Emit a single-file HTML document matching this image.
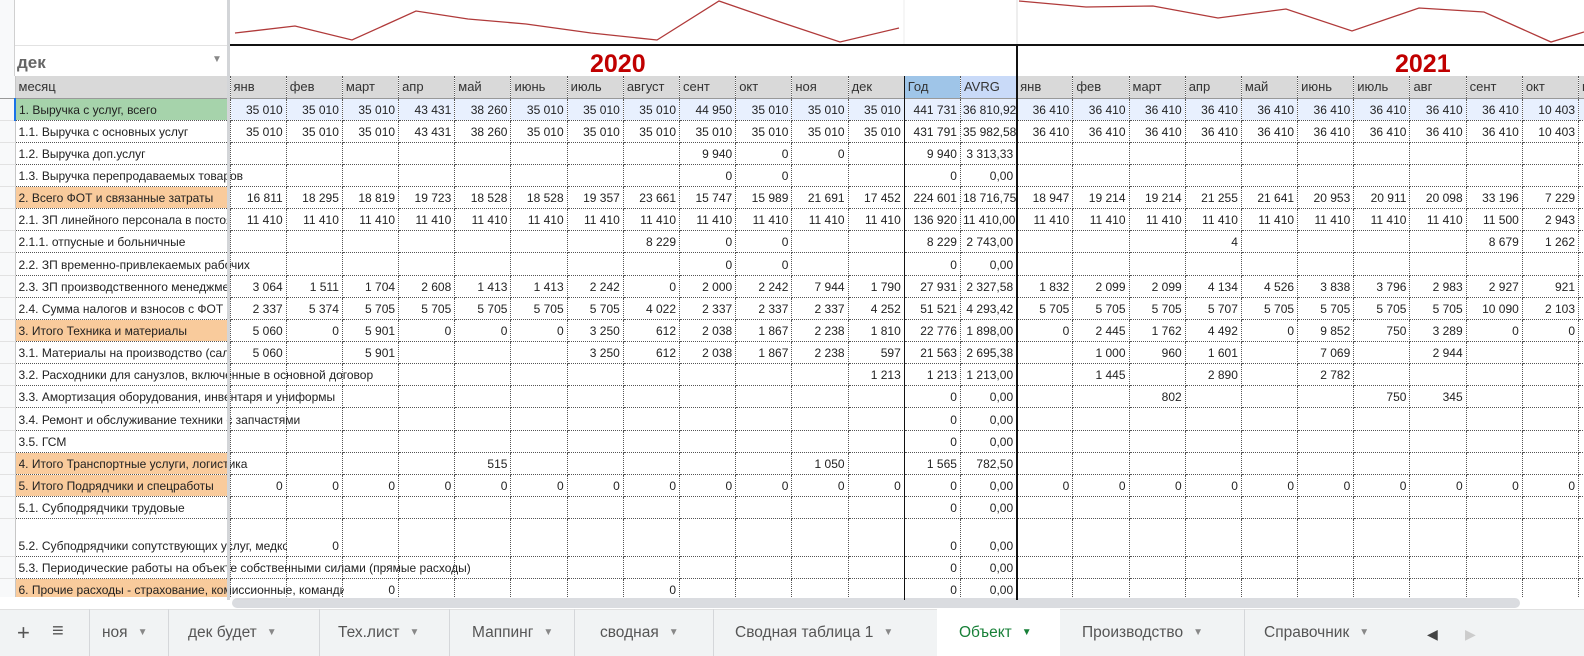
<!DOCTYPE html>
<html><head><meta charset="utf-8">
<style>
*{margin:0;padding:0;box-sizing:border-box}
body{width:1584px;height:656px;overflow:hidden;background:#fff;font-family:"Liberation Sans",Arial,sans-serif;position:relative}
#wrap{position:absolute;left:0;top:0;width:1584px;height:600px;overflow:hidden}
table{position:absolute;left:0;top:76px;border-collapse:collapse;table-layout:fixed;width:1691px}
td{font-size:12px;color:#222;white-space:nowrap;overflow:hidden;border-right:1px dotted #555;border-bottom:1px dotted #555;text-align:right;padding:0 3px 2px 2px;vertical-align:bottom;line-height:15px;height:22.15px}
td.n{background:#f8f9fa;border-right:1px solid #c7c7c7;border-bottom:1px solid #e2e2e2;padding:0}
td.l{text-align:left;overflow:visible;position:relative;padding-left:3px}
td.l div{position:relative;z-index:2;overflow:hidden;width:209px}
tr.h td{background:#d9d9d9;text-align:left;font-size:13px;color:#333;height:22px;vertical-align:middle;padding:0 0 0 3px;border-bottom:1px solid #999}
tr.h td.n{background:#f8f9fa}
.g{background:#a6d3ab}
.o{background:#f9cb9c}
tr.s td{background:#e8f0fe}
tr.s td.l{background:#a6d3ab;border-left:2px solid #1a73e8}
tr.s td.n{background:#f8f9fa}
.yr{position:absolute;top:50px;font-size:25px;font-weight:bold;color:#c00000}
.tab{position:absolute;top:624px;font-size:15.5px;color:#555}
.sep{position:absolute;top:609px;width:1px;height:47px;background:#d5d7da}
.ar{font-size:10px;color:#888;margin-left:10px;position:relative;top:-2px}
</style></head><body>
<div id="wrap">
<div style="position:absolute;left:0;top:0;width:15px;height:600px;background:#f8f9fa;border-right:1px solid #d0d0d0"></div>
<div style="position:absolute;left:15px;top:45px;width:212px;height:1px;background:#e2e2e2"></div>
<svg style="position:absolute;left:0;top:0" width="1584" height="46">
<polyline fill="none" stroke="#b03a3a" stroke-width="1.3" points="235,33 295,26 352,40 416,11 468,19 526,24 591,33 657,40 719,1 780,22 840,42 899,28"/>
<polyline fill="none" stroke="#b03a3a" stroke-width="1.3" points="1019,1 1086,7 1153,6 1218,18 1286,9 1352,31 1419,8 1484,12 1551,42 1584,32"/>
<line x1="1017" y1="0" x2="1017" y2="45" stroke="#ddd"/>
<line x1="904" y1="0" x2="904" y2="45" stroke="#eee"/>
</svg>
<div style="position:absolute;left:230px;top:44px;width:1354px;height:2px;background:#111"></div>
<div style="position:absolute;left:17px;top:53px;font-size:17px;color:#666;font-weight:bold">дек</div>
<div style="position:absolute;left:212px;top:54px;font-size:10px;color:#888">▼</div>
<div class="yr" style="left:590px">2020</div>
<div class="yr" style="left:1395px">2021</div>
<table>
<colgroup><col style="width:15px"><col style="width:215px"><col span="26" style="width:56.2px"></colgroup>
<tr class="h"><td class="n"></td><td>месяц</td><td>янв</td><td>фев</td><td>март</td><td>апр</td><td>май</td><td>июнь</td><td>июль</td><td>август</td><td>сент</td><td>окт</td><td>ноя</td><td>дек</td><td style="background:#9fc5e8">Год</td><td style="background:#c9daf8">AVRG</td><td>янв</td><td>фев</td><td>март</td><td>апр</td><td>май</td><td>июнь</td><td>июль</td><td>авг</td><td>сент</td><td>окт</td><td>нояб</td><td></td></tr>
<tr class="s"><td class="n"></td><td class="l"><div>1. Выручка с услуг, всего</div></td><td>35 010</td><td>35 010</td><td>35 010</td><td>43 431</td><td>38 260</td><td>35 010</td><td>35 010</td><td>35 010</td><td>44 950</td><td>35 010</td><td>35 010</td><td>35 010</td><td>441 731</td><td>36 810,92</td><td>36 410</td><td>36 410</td><td>36 410</td><td>36 410</td><td>36 410</td><td>36 410</td><td>36 410</td><td>36 410</td><td>36 410</td><td>10 403</td><td></td><td></td></tr>
<tr><td class="n"></td><td class="l"><div>1.1. Выручка с основных услуг</div></td><td>35 010</td><td>35 010</td><td>35 010</td><td>43 431</td><td>38 260</td><td>35 010</td><td>35 010</td><td>35 010</td><td>35 010</td><td>35 010</td><td>35 010</td><td>35 010</td><td>431 791</td><td>35 982,58</td><td>36 410</td><td>36 410</td><td>36 410</td><td>36 410</td><td>36 410</td><td>36 410</td><td>36 410</td><td>36 410</td><td>36 410</td><td>10 403</td><td></td><td></td></tr>
<tr><td class="n"></td><td class="l"><div>1.2. Выручка доп.услуг</div></td><td></td><td></td><td></td><td></td><td></td><td></td><td></td><td></td><td>9 940</td><td>0</td><td>0</td><td></td><td>9 940</td><td>3 313,33</td><td></td><td></td><td></td><td></td><td></td><td></td><td></td><td></td><td></td><td></td><td></td><td></td></tr>
<tr><td class="n"></td><td class="l"><div style="width:400px">1.3. Выручка перепродаваемых товаров</div></td><td></td><td></td><td></td><td></td><td></td><td></td><td></td><td></td><td>0</td><td>0</td><td></td><td></td><td>0</td><td>0,00</td><td></td><td></td><td></td><td></td><td></td><td></td><td></td><td></td><td></td><td></td><td></td><td></td></tr>
<tr><td class="n"></td><td class="l o"><div>2. Всего ФОТ и связанные затраты</div></td><td>16 811</td><td>18 295</td><td>18 819</td><td>19 723</td><td>18 528</td><td>18 528</td><td>19 357</td><td>23 661</td><td>15 747</td><td>15 989</td><td>21 691</td><td>17 452</td><td>224 601</td><td>18 716,75</td><td>18 947</td><td>19 214</td><td>19 214</td><td>21 255</td><td>21 641</td><td>20 953</td><td>20 911</td><td>20 098</td><td>33 196</td><td>7 229</td><td></td><td></td></tr>
<tr><td class="n"></td><td class="l"><div>2.1. ЗП линейного персонала в постоянном штате</div></td><td>11 410</td><td>11 410</td><td>11 410</td><td>11 410</td><td>11 410</td><td>11 410</td><td>11 410</td><td>11 410</td><td>11 410</td><td>11 410</td><td>11 410</td><td>11 410</td><td>136 920</td><td>11 410,00</td><td>11 410</td><td>11 410</td><td>11 410</td><td>11 410</td><td>11 410</td><td>11 410</td><td>11 410</td><td>11 410</td><td>11 500</td><td>2 943</td><td></td><td></td></tr>
<tr><td class="n"></td><td class="l"><div>2.1.1. отпусные и больничные</div></td><td></td><td></td><td></td><td></td><td></td><td></td><td></td><td>8 229</td><td>0</td><td>0</td><td></td><td></td><td>8 229</td><td>2 743,00</td><td></td><td></td><td></td><td>4</td><td></td><td></td><td></td><td></td><td>8 679</td><td>1 262</td><td></td><td></td></tr>
<tr><td class="n"></td><td class="l"><div style="width:400px">2.2. ЗП временно-привлекаемых рабочих</div></td><td></td><td></td><td></td><td></td><td></td><td></td><td></td><td></td><td>0</td><td>0</td><td></td><td></td><td>0</td><td>0,00</td><td></td><td></td><td></td><td></td><td></td><td></td><td></td><td></td><td></td><td></td><td></td><td></td></tr>
<tr><td class="n"></td><td class="l"><div>2.3. ЗП производственного менеджмента</div></td><td>3 064</td><td>1 511</td><td>1 704</td><td>2 608</td><td>1 413</td><td>1 413</td><td>2 242</td><td>0</td><td>2 000</td><td>2 242</td><td>7 944</td><td>1 790</td><td>27 931</td><td>2 327,58</td><td>1 832</td><td>2 099</td><td>2 099</td><td>4 134</td><td>4 526</td><td>3 838</td><td>3 796</td><td>2 983</td><td>2 927</td><td>921</td><td></td><td></td></tr>
<tr><td class="n"></td><td class="l"><div>2.4. Сумма налогов и взносов с ФОТ</div></td><td>2 337</td><td>5 374</td><td>5 705</td><td>5 705</td><td>5 705</td><td>5 705</td><td>5 705</td><td>4 022</td><td>2 337</td><td>2 337</td><td>2 337</td><td>4 252</td><td>51 521</td><td>4 293,42</td><td>5 705</td><td>5 705</td><td>5 705</td><td>5 707</td><td>5 705</td><td>5 705</td><td>5 705</td><td>5 705</td><td>10 090</td><td>2 103</td><td></td><td></td></tr>
<tr><td class="n"></td><td class="l o"><div>3. Итого Техника и материалы</div></td><td>5 060</td><td>0</td><td>5 901</td><td>0</td><td>0</td><td>0</td><td>3 250</td><td>612</td><td>2 038</td><td>1 867</td><td>2 238</td><td>1 810</td><td>22 776</td><td>1 898,00</td><td>0</td><td>2 445</td><td>1 762</td><td>4 492</td><td>0</td><td>9 852</td><td>750</td><td>3 289</td><td>0</td><td>0</td><td></td><td></td></tr>
<tr><td class="n"></td><td class="l"><div>3.1. Материалы на производство (сальдо)</div></td><td>5 060</td><td></td><td>5 901</td><td></td><td></td><td></td><td>3 250</td><td>612</td><td>2 038</td><td>1 867</td><td>2 238</td><td>597</td><td>21 563</td><td>2 695,38</td><td></td><td>1 000</td><td>960</td><td>1 601</td><td></td><td>7 069</td><td></td><td>2 944</td><td></td><td></td><td></td><td></td></tr>
<tr><td class="n"></td><td class="l"><div style="width:500px">3.2. Расходники для санузлов, включенные в основной договор</div></td><td></td><td></td><td></td><td></td><td></td><td></td><td></td><td></td><td></td><td></td><td></td><td>1 213</td><td>1 213</td><td>1 213,00</td><td></td><td>1 445</td><td></td><td>2 890</td><td></td><td>2 782</td><td></td><td></td><td></td><td></td><td></td><td></td></tr>
<tr><td class="n"></td><td class="l"><div style="width:500px">3.3. Амортизация оборудования, инвентаря и униформы</div></td><td></td><td></td><td></td><td></td><td></td><td></td><td></td><td></td><td></td><td></td><td></td><td></td><td>0</td><td>0,00</td><td></td><td></td><td>802</td><td></td><td></td><td></td><td>750</td><td>345</td><td></td><td></td><td></td><td></td></tr>
<tr><td class="n"></td><td class="l"><div style="width:500px">3.4. Ремонт и обслуживание техники с запчастями</div></td><td></td><td></td><td></td><td></td><td></td><td></td><td></td><td></td><td></td><td></td><td></td><td></td><td>0</td><td>0,00</td><td></td><td></td><td></td><td></td><td></td><td></td><td></td><td></td><td></td><td></td><td></td><td></td></tr>
<tr><td class="n"></td><td class="l"><div>3.5. ГСМ</div></td><td></td><td></td><td></td><td></td><td></td><td></td><td></td><td></td><td></td><td></td><td></td><td></td><td>0</td><td>0,00</td><td></td><td></td><td></td><td></td><td></td><td></td><td></td><td></td><td></td><td></td><td></td><td></td></tr>
<tr><td class="n"></td><td class="l o"><div style="width:400px">4. Итого Транспортные услуги, логистика</div></td><td></td><td></td><td></td><td></td><td>515</td><td></td><td></td><td></td><td></td><td></td><td>1 050</td><td></td><td>1 565</td><td>782,50</td><td></td><td></td><td></td><td></td><td></td><td></td><td></td><td></td><td></td><td></td><td></td><td></td></tr>
<tr><td class="n"></td><td class="l o"><div>5. Итого Подрядчики и спецработы</div></td><td>0</td><td>0</td><td>0</td><td>0</td><td>0</td><td>0</td><td>0</td><td>0</td><td>0</td><td>0</td><td>0</td><td>0</td><td>0</td><td>0,00</td><td>0</td><td>0</td><td>0</td><td>0</td><td>0</td><td>0</td><td>0</td><td>0</td><td>0</td><td>0</td><td></td><td></td></tr>
<tr><td class="n"></td><td class="l"><div>5.1. Субподрядчики трудовые</div></td><td></td><td></td><td></td><td></td><td></td><td></td><td></td><td></td><td></td><td></td><td></td><td></td><td>0</td><td>0,00</td><td></td><td></td><td></td><td></td><td></td><td></td><td></td><td></td><td></td><td></td><td></td><td></td></tr>
<tr><td class="n" style="height:38px"></td><td class="l"><div style="width:268px">5.2. Субподрядчики сопутствующих услуг, медкомиссия</div></td><td></td><td>0</td><td></td><td></td><td></td><td></td><td></td><td></td><td></td><td></td><td></td><td></td><td>0</td><td>0,00</td><td></td><td></td><td></td><td></td><td></td><td></td><td></td><td></td><td></td><td></td><td></td><td></td></tr>
<tr><td class="n"></td><td class="l"><div style="width:600px">5.3. Периодические работы на объекте собственными силами (прямые расходы)</div></td><td></td><td></td><td></td><td></td><td></td><td></td><td></td><td></td><td></td><td></td><td></td><td></td><td>0</td><td>0,00</td><td></td><td></td><td></td><td></td><td></td><td></td><td></td><td></td><td></td><td></td><td></td><td></td></tr>
<tr><td class="n"></td><td class="l o"><div style="width:325px">6. Прочие расходы - страхование, комиссионные, командировочные</div></td><td></td><td></td><td>0</td><td></td><td></td><td></td><td></td><td>0</td><td></td><td></td><td></td><td></td><td>0</td><td>0,00</td><td></td><td></td><td></td><td></td><td></td><td></td><td></td><td></td><td></td><td></td><td></td><td></td></tr>
</table>
<div style="position:absolute;left:904px;top:76px;width:1px;height:524px;background:#111;z-index:3"></div>
<div style="position:absolute;left:1016px;top:45px;width:2px;height:555px;background:#111;z-index:3"></div>
<div style="position:absolute;left:227px;top:0;width:3px;height:600px;background:#d3d5d8;z-index:5"></div>
</div>
<div style="position:absolute;left:0;top:597px;width:1584px;height:12px;background:#fff"></div>
<div style="position:absolute;left:232px;top:598px;width:1288px;height:10px;border-radius:5px;background:#dadce0"></div>
<div style="position:absolute;left:0;top:609px;width:1584px;height:47px;background:#f1f3f4;border-top:1px solid #e0e0e0"></div>
<div style="position:absolute;left:937px;top:609px;width:123px;height:47px;background:#fff"></div>
<div class="tab" style="left:17px;font-size:22px;top:620px;color:#555">+</div>
<div class="tab" style="left:52px;font-size:20px;top:620px;color:#555">≡</div>
<div class="sep" style="left:89px"></div>
<div class="tab" style="left:102px">ноя<span class="ar">▼</span></div>
<div class="sep" style="left:168px"></div>
<div class="tab" style="left:188px">дек будет<span class="ar">▼</span></div>
<div class="sep" style="left:319px"></div>
<div class="tab" style="left:338px">Тех.лист<span class="ar">▼</span></div>
<div class="sep" style="left:449px"></div>
<div class="tab" style="left:472px">Маппинг<span class="ar">▼</span></div>
<div class="sep" style="left:574px"></div>
<div class="tab" style="left:600px">сводная<span class="ar">▼</span></div>
<div class="sep" style="left:713px"></div>
<div class="tab" style="left:735px">Сводная таблица 1<span class="ar">▼</span></div>
<div class="tab" style="left:959px;color:#188038">Объект<span class="ar" style="color:#188038">▼</span></div>
<div class="tab" style="left:1082px">Производство<span class="ar">▼</span></div>
<div class="sep" style="left:1244px"></div>
<div class="tab" style="left:1264px">Справочник<span class="ar">▼</span></div>
<div class="tab" style="left:1427px;font-size:14px;top:626px;color:#444">◀</div>
<div class="tab" style="left:1465px;font-size:14px;top:626px;color:#ccc">▶</div>
</body></html>
